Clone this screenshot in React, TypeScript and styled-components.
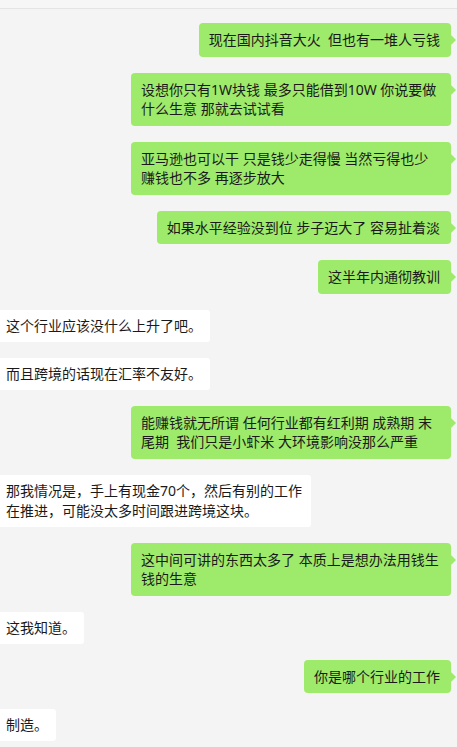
import React from 'react';
import styled, { createGlobalStyle } from 'styled-components';

const GlobalStyle = createGlobalStyle`
  html, body {
    margin: 0;
    padding: 0;
    background: #f4f4f4;
  }
  body {
    font-family: "Noto Sans", "Noto Sans CJK SC", sans-serif;
    font-size: 14px;
    color: #1a1a1a;
  }
`;

type Side = 'left' | 'right';

interface Message {
  from: Side;
  text: string;
}

const MESSAGES: Message[] = [
  { from: 'right', text: '现在国内抖音大火  但也有一堆人亏钱' },
  { from: 'right', text: '设想你只有1W块钱 最多只能借到10W 你说要做什么生意 那就去试试看' },
  { from: 'right', text: '亚马逊也可以干 只是钱少走得慢 当然亏得也少 赚钱也不多 再逐步放大' },
  { from: 'right', text: '如果水平经验没到位 步子迈大了 容易扯着淡' },
  { from: 'right', text: '这半年内通彻教训' },
  { from: 'left', text: '这个行业应该没什么上升了吧。' },
  { from: 'left', text: '而且跨境的话现在汇率不友好。' },
  { from: 'right', text: '能赚钱就无所谓 任何行业都有红利期 成熟期 末尾期  我们只是小虾米 大环境影响没那么严重' },
  { from: 'left', text: '那我情况是，手上有现金70个，然后有别的工作在推进，可能没太多时间跟进跨境这块。' },
  { from: 'right', text: '这中间可讲的东西太多了 本质上是想办法用钱生钱的生意' },
  { from: 'left', text: '这我知道。' },
  { from: 'right', text: '你是哪个行业的工作' },
  { from: 'left', text: '制造。' },
];

const Page = styled.div`
  min-height: 747px;
  background: #f4f4f4;
`;

const TopBar = styled.div`
  height: 8px;
  background: #f6f6f6;
  border-bottom: 1px solid #e4e4e4;
`;

const ChatList = styled.div`
  display: flex;
  flex-direction: column;
  gap: 16px;
  padding: 14px 6px 0 0;
`;

const Row = styled.div<{ $from: Side }>`
  display: flex;
  justify-content: ${(p) => (p.$from === 'right' ? 'flex-end' : 'flex-start')};
`;

const Bubble = styled.div<{ $from: Side }>`
  position: relative;
  max-width: ${(p) => (p.$from === 'right' ? '299px' : '297px')};
  padding: ${(p) => (p.$from === 'right' ? '7px 11px 7px 10px' : '6px 8px 6px 6px')};
  line-height: ${(p) => (p.$from === 'right' ? '19.5px' : '20px')};
  white-space: pre-wrap;
  background: ${(p) => (p.$from === 'right' ? '#9eea6a' : '#ffffff')};
  border-radius: ${(p) => (p.$from === 'right' ? '4px' : '0 3px 3px 0')};

  &::after {
    content: '';
    display: ${(p) => (p.$from === 'right' ? 'block' : 'none')};
    position: absolute;
    right: -5px;
    top: 12px;
    border-top: 5px solid transparent;
    border-bottom: 5px solid transparent;
    border-left: 5px solid #9eea6a;
  }
`;

const App: React.FC = () => {
  return (
    <Page>
      <GlobalStyle />
      <TopBar />
      <ChatList>
        {MESSAGES.map((m, i) => (
          <Row key={i} $from={m.from}>
            <Bubble $from={m.from}>{m.text}</Bubble>
          </Row>
        ))}
      </ChatList>
    </Page>
  );
};

export default App;
